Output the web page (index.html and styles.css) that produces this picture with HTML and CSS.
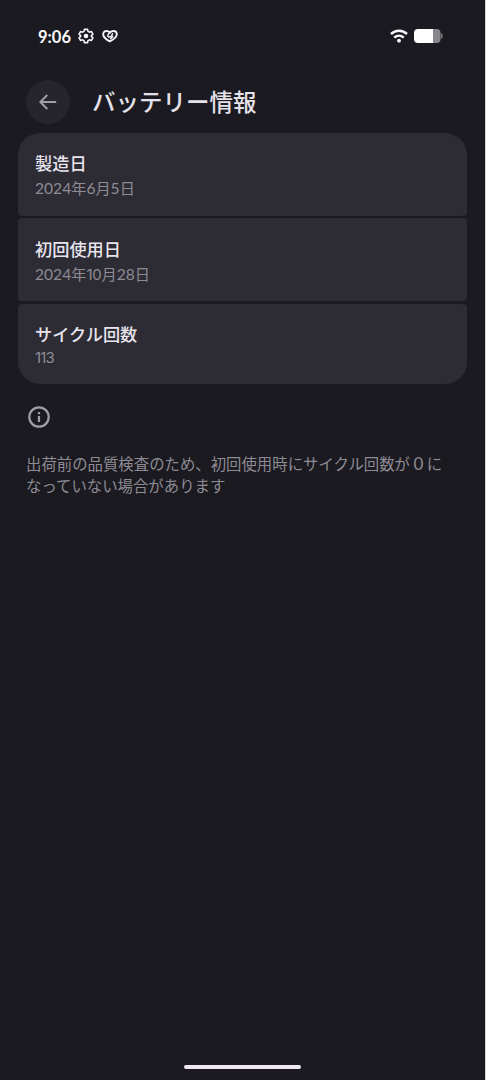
FILE: index.html
```html
<!DOCTYPE html>
<html lang="ja">
<head>
<meta charset="utf-8">
<title>バッテリー情報</title>
<link rel="stylesheet" href="styles.css">
</head>
<body>
<div class="screen">
  <div class="status">
    <span class="clock">9:06</span>
    <svg class="gear" width="16" height="16" viewBox="0 0 24 24" fill="none" stroke="#f6f3fa" stroke-width="2.400" stroke-linejoin="round"><path d="M9.600 2h4.800l.6 3 2.100 1.200 2.900-1 2.400 4.100-2.300 2v1.400l2.300 2-2.400 4.100-2.900-1-2.100 1.200-.6 3H9.600L9 19l-2.100-1.200-2.900 1-2.400-4.100 2.300-2v-1.400l-2.300-2L4 5.200l2.900 1L9 5z"/><circle cx="12" cy="12" r="3.500" fill="#f6f3fa" stroke="none"/></svg>
    <svg class="heart" width="16" height="14" viewBox="0 0 16 14" fill="none" stroke="#f6f3fa" stroke-width="1.900" stroke-linecap="round" stroke-linejoin="round"><path d="M7.800 12.400C5.500 11.200 1.300 8.300 1.200 5.400 1.100 3.300 2.600 2 4.600 2c1.600 0 2.500.6 3.400 1.500C8.900 2.600 9.900 2 11.400 2c2 0 3.400 1.400 3.400 3.300 0 3-4.500 5.900-7 7.100z"/><path d="M8 3.500C5.800 5.400 5 7.400 6.700 8c1.700.5 3.500-1.400 3.700-3.200M8.600 9.600l2.200-1.900" stroke-width="1.500"/></svg>
    <svg class="wifi" width="18" height="14" viewBox="0 0 18 14" fill="none" stroke="#f8f6fa" stroke-width="2.500"><path d="M1 5c4.600-4.300 11.400-4.300 16 0M4.200 8.600c2.800-2.500 6.800-2.500 9.600 0"/><circle cx="9" cy="11.700" r="1.900" fill="#f8f6fa" stroke="none"/></svg>
    <svg class="battery" width="29" height="14" viewBox="0 0 29 14"><path d="M4 0h15v14H4a4 4 0 0 1-4-4V4a4 4 0 0 1 4-4z" fill="#fff"/><path d="M19 0h3.500a4 4 0 0 1 4 4v6a4 4 0 0 1-4 4H19z" fill="#88868c"/><path d="M27.300 4.500c1.300.3 1.300 4.700 0 5z" fill="#88868c" stroke="#88868c" stroke-width=".6"/></svg>
  </div>
  <header class="header">
    <div class="back"><svg width="18" height="16" viewBox="0 0 18 16" fill="none" stroke="#a19fa8" stroke-width="1.900"><path d="M17.200 8H1.500M8.300 1 1.300 8l7 7"/></svg></div>
    <h1 class="title">バッテリー情報</h1>
  </header>
  <main class="list">
    <section class="item"><div class="name">製造日</div><div class="value"><span class="num">2024</span>年<span class="num">6</span>月<span class="num">5</span>日</div></section>
    <section class="item"><div class="name">初回使用日</div><div class="value"><span class="num">2024</span>年<span class="num ten">10</span>月<span class="num">28</span>日</div></section>
    <section class="item last"><div class="name">サイクル回数</div><div class="value"><span class="num count">113</span></div></section>
  </main>
  <svg class="info" width="22" height="22" viewBox="0 0 22 22" fill="none" stroke="#a09da7" stroke-width="2.200"><circle cx="11" cy="11" r="9.700"/><path d="M11 10v6M11 6v2.200"/></svg>
  <p class="note">出荷前の品質検査のため、初回使用時にサイクル回数が <span class="zero">0</span> に<br>なっていない場合があります</p>
  <div class="handle"></div>
</div>
</body>
</html>
```
FILE: styles.css
```css
* { box-sizing: border-box; }
body { margin: 0; background: #d5d4d7; font-family: "Noto Sans CJK JP", sans-serif; }
.screen { width: 485px; height: 1080px; background: #1b1a20; display: flex; flex-direction: column; overflow: hidden; }
.status { height: 72px; padding: 0 42px 0 38px; display: flex; align-items: center; flex-shrink: 0; }
.clock { width: 40px; padding-top: 1px; font: 700 16.5px "Lato", sans-serif; color: #faf8fc; }
.heart { margin-left: 8px; }
.wifi { margin-left: auto; }
.battery { margin-left: 6px; }
.header { height: 60px; padding: 8px 0 0 26px; display: flex; align-items: flex-start; gap: 22px; flex-shrink: 0; }
.back { width: 44px; height: 44px; border-radius: 50%; background: #26252c; display: flex; align-items: center; justify-content: center; }
.title { margin: 0; font-size: 23.5px; line-height: 42px; font-weight: 500; color: #e5e1ea; }
.list { margin: .5px 18px 0; display: flex; flex-direction: column; gap: 2.7px; color: #e8e4ee; flex-shrink: 0; }
.item { height: 83px; padding: 17.5px 17px 0; background: #2d2b34; border-radius: 4px; }
.item:first-child { border-radius: 22px 22px 4px 4px; }
.last { height: 80px; padding-top: 17px; border-radius: 4px 4px 22px 22px; }
.name { font-size: 17.2px; line-height: 25px; font-weight: 500; }
.value { font-size: 15.2px; line-height: 24px; color: #8d8b94; white-space: nowrap; }
.num { font-family: "Lato", sans-serif; font-size: 15.6px; line-height: 1; }
.ten { font-family: "Inter", sans-serif; font-size: 15px; letter-spacing: -.2px; }
.count { font-family: "Inter", sans-serif; font-size: 15px; letter-spacing: -.9px; }
.last .value { line-height: 20px; }
.info { margin: 22px 0 0 28px; flex-shrink: 0; }
.note { margin: 24px 0 0 26px; font-size: 15.4px; line-height: 22px; color: #8d8b94; white-space: nowrap; }
.zero { font-family: "Lato", sans-serif; font-size: 17px; line-height: 1; }
.handle { width: 117px; height: 4px; margin: auto auto 11px; border-radius: 2px; background: #f0e9f4; }
```
